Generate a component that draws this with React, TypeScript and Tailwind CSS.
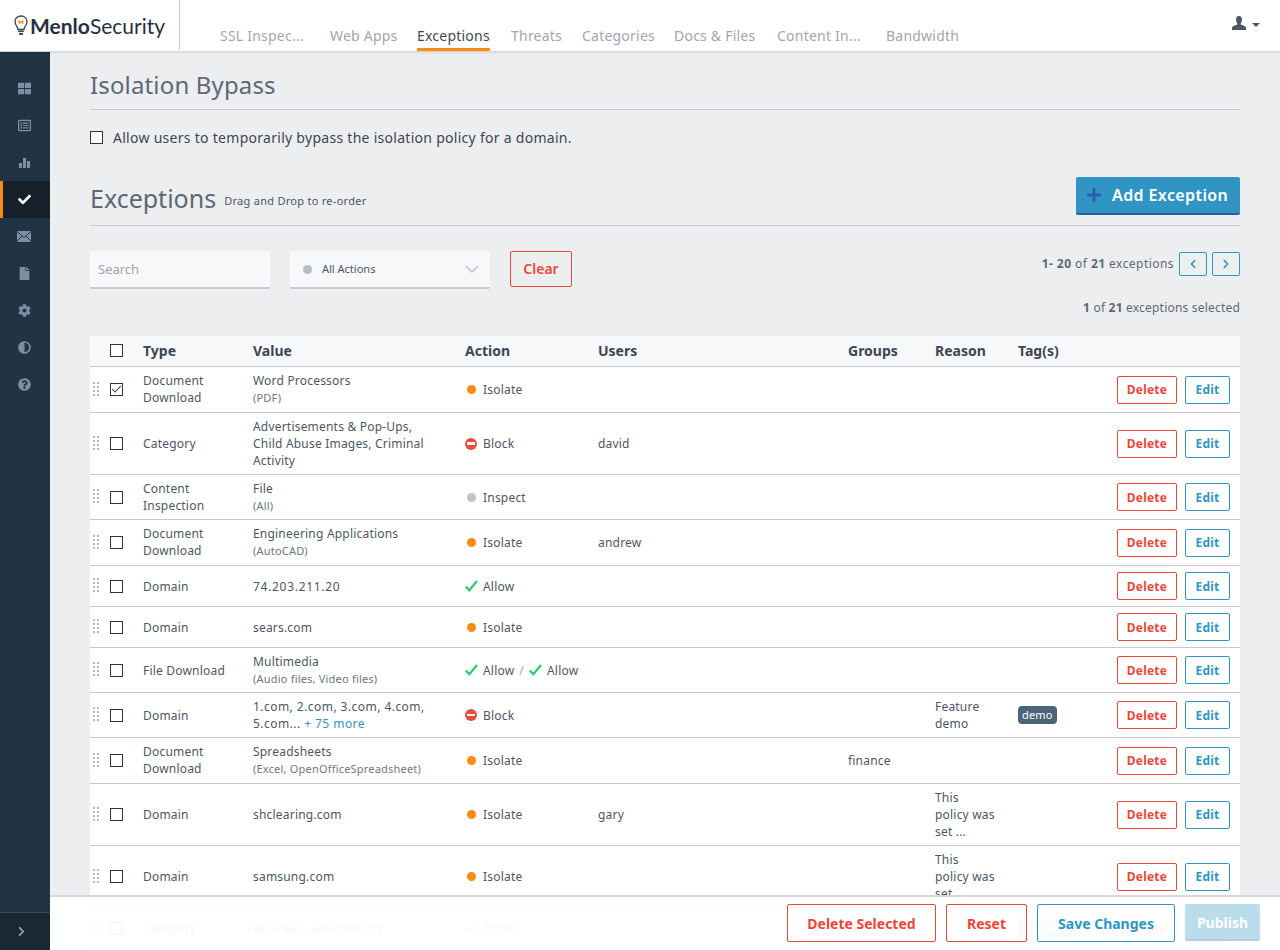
import React from "react";
import { FaThLarge, FaRegListAlt, FaCheck, FaFile, FaCog, FaAdjust, FaQuestionCircle, FaChevronLeft, FaChevronRight, FaPlus } from "react-icons/fa";

const font = { fontFamily: '"Noto Sans", "Open Sans", sans-serif' };

function Grip() {
  return (
    <svg width="7" height="16" viewBox="0 0 7 16" className="shrink-0" fill="#b4b6bb">
      {[0, 4, 8, 12].map((y) => (
        <g key={y}>
          <rect x="0" y={y} width="2" height="2" />
          <rect x="4" y={y} width="2" height="2" />
        </g>
      ))}
    </svg>
  );
}

function Box({ checked }: { checked?: boolean }) {
  return (
    <span className="w-[13px] h-[13px] border border-[#333] block relative bg-white shrink-0">
      {checked && (
        <svg viewBox="0 0 13 13" className="absolute inset-0 w-[11px] h-[11px]" fill="none" stroke="#444" strokeWidth="1.2">
          <path d="M1.5 6 L4.8 9.5 L11.5 2.5" />
        </svg>
      )}
    </span>
  );
}

function Tick() {
  return (
    <svg width="13" height="12" viewBox="0 0 13 12" fill="none" stroke="#2ecc71" strokeWidth="2.2" className="shrink-0">
      <path d="M0.8 6.5 L4.3 10.3 L12 1" />
    </svg>
  );
}

function Envelope() {
  return (
    <svg width="14" height="11" viewBox="0 0 14 11" fill="none">
      <rect x="0" y="0" width="14" height="11" fill="currentColor" />
      <path d="M0 0.5 L7 6.5 L14 0.5 M0 10.5 L5 4.8 M14 10.5 L9 4.8" stroke="#223344" strokeWidth="1" />
    </svg>
  );
}

function Bars() {
  return (
    <svg width="13" height="13" viewBox="0 0 13 13" fill="currentColor">
      <rect x="1" y="7" width="3" height="5" />
      <rect x="5" y="2" width="3" height="10" />
      <rect x="9" y="5" width="3" height="7" />
    </svg>
  );
}

function Action({ kind }: { kind: string }) {
  if (kind === "Isolate" || kind === "Inspect")
    return (
      <span className="flex items-center">
        <span className={`w-[9px] h-[9px] rounded-full ml-[2px] mr-[7px] ${kind === "Isolate" ? "bg-[#f98b13]" : "bg-[#bfc3cb]"}`} />
        {kind}
      </span>
    );
  if (kind === "Block")
    return (
      <span className="flex items-center">
        <span className="w-3 h-3 rounded-full bg-[#e74c3c] flex items-center justify-center mr-[6px]">
          <span className="w-[8px] h-[2.5px] bg-white block" />
        </span>
        Block
      </span>
    );
  if (kind === "Allow2")
    return (
      <span className="flex items-center">
        <Tick />
        <span className="ml-[5px]">Allow</span>
        <span className="mx-[5px] text-[#a0a4ad]">/</span>
        <Tick />
        <span className="ml-[5px]">Allow</span>
      </span>
    );
  return (
    <span className="flex items-center">
      <Tick />
      <span className="ml-[5px]">Allow</span>
    </span>
  );
}

type Row = {
  h: string;
  type: React.ReactNode;
  value: React.ReactNode;
  sub?: string;
  action: string;
  users?: string;
  groups?: string;
  reason?: React.ReactNode;
  tag?: string;
  checked?: boolean;
};

const rows: Row[] = [
  { h: "h-[46px]", type: <>Document<br />Download</>, value: "Word Processors", sub: "(PDF)", action: "Isolate", checked: true },
  { h: "h-[62px]", type: "Category", value: <>Advertisements &amp; Pop-Ups,<br />Child Abuse Images, Criminal<br />Activity</>, action: "Block", users: "david" },
  { h: "h-[45px]", type: <>Content<br />Inspection</>, value: "File", sub: "(All)", action: "Inspect" },
  { h: "h-[46px]", type: <>Document<br />Download</>, value: "Engineering Applications", sub: "(AutoCAD)", action: "Isolate", users: "andrew" },
  { h: "h-[41px]", type: "Domain", value: <span className="tracking-[0.7px]">74.203.211.20</span>, action: "Allow" },
  { h: "h-[41px]", type: "Domain", value: "sears.com", action: "Isolate" },
  { h: "h-[45px]", type: "File Download", value: "Multimedia", sub: "(Audio files, Video files)", action: "Allow2" },
  { h: "h-[45px]", type: "Domain", value: <span className="tracking-[0.45px]">1.com, 2.com, 3.com, 4.com,<br />5.com... <span className="text-[#3095c3]">+ 75 more</span></span>, action: "Block", reason: <>Feature<br />demo</>, tag: "demo" },
  { h: "h-[46px]", type: <>Document<br />Download</>, value: "Spreadsheets", sub: "(Excel, OpenOfficeSpreadsheet)", action: "Isolate", groups: "finance" },
  { h: "h-[62px]", type: "Domain", value: "shclearing.com", action: "Isolate", users: "gary", reason: <>This<br />policy was<br />set ...</> },
  { h: "h-[62px]", type: "Domain", value: "samsung.com", action: "Isolate", reason: <>This<br />policy was<br />set ...</> },
  { h: "h-[41px]", type: "Category", value: "Business, Government", action: "Allow", tag: "business" },
];

const tabs = [
  { label: "SSL Inspec...", cls: "ml-[40px] w-[110px]" },
  { label: "Web Apps", cls: "w-[87px]" },
  { label: "Exceptions", cls: "w-[94px]", active: true },
  { label: "Threats", cls: "w-[71px]" },
  { label: "Categories", cls: "w-[92px]" },
  { label: "Docs & Files", cls: "w-[103px]" },
  { label: "Content In...", cls: "w-[109px]" },
  { label: "Bandwidth", cls: "w-[90px]" },
];

const side = [FaThLarge, FaRegListAlt, Bars, FaCheck, Envelope, FaFile, FaCog, FaAdjust, FaQuestionCircle];

const cols = "grid grid-cols-[53px_110px_212px_133px_250px_87px_83px_1fr] items-center";

export default function App() {
  return (
    <div style={font} className="w-[1280px] h-[950px] overflow-hidden flex flex-col bg-[#edeef0] text-[#4d5666]">
      <header className="h-[52px] shrink-0 bg-white border-b border-[#d4d5d8] shadow-[0_1px_2px_rgba(0,0,0,0.08)] flex relative z-10">
        <div className="w-[180px] h-[50px] border-r border-[#c8c9cc] flex items-center pl-[14px]">
          <svg width="14" height="21" viewBox="0 0 14 21" fill="none" className="shrink-0">
            <path d="M4 14.5 C4 11.5 1 10.5 1 6.5 C1 3.2 3.7 1 7 1 C10.3 1 13 3.2 13 6.5 C13 10.5 10 11.5 10 14.5 Z" stroke="#3b4652" strokeWidth="1.3" />
            <path d="M5.3 9 V6 L7 7.6 L8.7 6 V9" stroke="#f98b13" strokeWidth="1.2" />
            <rect x="4.2" y="15.5" width="5.6" height="1.6" fill="#3b4652" />
            <rect x="4.8" y="18" width="4.4" height="2" rx="1" fill="#3b4652" />
          </svg>
          <span style={{ fontFamily: '"Lato", sans-serif' }} className="text-[21px] leading-none text-[#25313f] ml-[2px]">
            <span className="font-bold">Menlo</span>Security
          </span>
        </div>
        <nav className="flex h-[51px] items-end text-[14px] text-[#a0a6b2] tracking-[0.22px]">
          {tabs.map((t) => (
            <div key={t.label} className={t.cls}>
              <span className={t.active ? "block w-max pb-[2px] text-[#3f4a58] border-b-[3px] border-[#f98b13]" : "block w-max pb-[5px]"}>{t.label}</span>
            </div>
          ))}
        </nav>
        <div className="ml-auto mr-[20px] mt-[16px] flex items-start text-[#4d5666]">
          <svg width="14" height="14" viewBox="0 0 14 14" fill="currentColor">
            <path d="M7 0 C9.2 0 10 1.6 10 3.6 C10 5.4 9.2 7 8.6 7.6 V8.6 C10.6 9.4 13.6 10 14 11.4 V14 H0 V11.4 C0.4 10 3.4 9.4 5.4 8.6 V7.6 C4.8 7 4 5.4 4 3.6 C4 1.6 4.8 0 7 0 Z" />
          </svg>
          <span className="mt-[7px] ml-[6px] w-0 h-0 border-x-[4px] border-x-transparent border-t-[4px] border-t-[#4d5666]" />
        </div>
      </header>

      <div className="flex-1 flex min-h-0">
        <aside className="w-[50px] shrink-0 bg-[#223344] flex flex-col text-[#7f8fa3]">
          <div className="pt-[18px] flex flex-col">
            {side.map((Icon, i) => (
              <div key={i} className={`h-[37px] flex items-center justify-center pr-[2px] ${i === 3 ? "bg-[#16202a] border-l-[3px] border-[#f98b13] text-white !pr-[4px]" : ""}`}>
                <Icon className="w-[13px] h-[13px]" />
              </div>
            ))}
          </div>
          <div className="mt-auto h-[38px] bg-[#1b2733] border-t border-[#3c4a5a] flex items-center justify-center pr-[7px]">
            <FaChevronRight className="w-[11px] h-[11px] text-[#8fa3b8]" />
          </div>
        </aside>

        <main className="flex-1 relative overflow-hidden px-[40px]">
          <h1 className="text-[24px] leading-[32px] pt-[17px] pb-[8px] border-b border-[#c8c9cc] text-[#5d6876] tracking-[0.15px]">Isolation Bypass</h1>
          <label className="flex items-center mt-[19px] text-[14px] leading-[17px] text-[#3d4654] tracking-[0.28px]">
            <Box />
            <span className="ml-[10px]">Allow users to temporarily bypass the isolation policy for a domain.</span>
          </label>

          <div className="flex items-end mt-[31px] pb-[11px] border-b border-[#c8c9cc] h-[49px]">
            <h2 className="text-[25px] leading-[32px] text-[#5d6876]">Exceptions</h2>
            <span className="text-[11px] tracking-[0.28px] ml-[8px] mb-[5px] text-[#4d5666]">Drag and Drop to re-order</span>
            <button className="ml-auto self-start w-[164px] h-[38px] bg-[#3095c3] border-b-2 border-[#2a5ea8] rounded-[2px] text-white font-semibold text-[16px] tracking-[0.4px] flex items-center pl-[10px]">
              <FaPlus className="w-[16px] h-[16px] text-[#2a5ea8] mr-[10px]" />
              Add Exception
            </button>
          </div>

          <div className="flex mt-[25px] items-start">
            <input placeholder="Search" className="w-[180px] h-[38px] bg-[#f7f8fa] border-b-2 border-[#c8c9d0] rounded-[2px] px-[8px] text-[13px] outline-none placeholder:text-[#a0a4ad]" />
            <div className="w-[200px] h-[38px] ml-[20px] bg-[#f7f8fa] border-b-2 border-[#c8c9d0] rounded-[2px] flex items-center pl-[13px] text-[11px] text-[#4d5666]">
              <span className="w-[9px] h-[9px] rounded-full bg-[#b8bcc4] mr-[10px]" />
              All Actions
              <svg width="14" height="8" viewBox="0 0 14 8" className="ml-auto mr-[11px]" fill="none" stroke="#c0c3c9" strokeWidth="1.5">
                <path d="M1 1 L7 7 L13 1" />
              </svg>
            </div>
            <button className="w-[62px] h-[36px] ml-[20px] pb-[1px] border border-[#e8483a] rounded-[2px] text-[#e8483a] font-semibold text-[14px]">Clear</button>
            <div className="ml-auto mt-[1px] text-[12px] tracking-[0.45px] text-[#5d6876] flex items-center">
              <span><b>1- 20</b>&nbsp;of <b>21</b> exceptions</span>
              <span className="w-[28px] h-[24px] ml-[5px] border border-[#3095c3] rounded-[2px] flex items-center justify-center text-[#3095c3]"><FaChevronLeft className="w-[10px] h-[10px]" /></span>
              <span className="w-[28px] h-[24px] ml-[5px] border border-[#3095c3] rounded-[2px] flex items-center justify-center text-[#3095c3]"><FaChevronRight className="w-[10px] h-[10px]" /></span>
            </div>
          </div>
          <div className="text-right text-[12px] tracking-[0.2px] leading-[16px] text-[#5d6876] mt-[11px]"><b>1</b> of <b>21</b> exceptions selected</div>

          <div className="mt-[20px] text-[12px] leading-[17px]">
            <div className={`${cols} h-[31px] pb-[2px] bg-[#f7f8fa] border-b border-[#c8c8d4] text-[14px] font-bold text-[#3d4654]`}>
              <span className="pl-[20px]"><Box /></span>
              <span>Type</span>
              <span>Value</span>
              <span>Action</span>
              <span>Users</span>
              <span>Groups</span>
              <span>Reason</span>
              <span>Tag(s)</span>
            </div>
            {rows.map((r, i) => {
              const nudge = r.h === "h-[46px]" ? "-mt-[2px]" : "";
              return (
                <div key={i} className={`${cols} ${r.h} bg-white border-b border-[#c8c8d4] tracking-[0.2px]`}>
                  <span className="flex items-center pl-[3px]">
                    <Grip />
                    <span className="ml-[10px]"><Box checked={r.checked} /></span>
                  </span>
                  <span className={nudge}>{r.type}</span>
                  <span className={nudge}>
                    {r.value}
                    {r.sub && <span className="block text-[11px] text-[#6d7685]">{r.sub}</span>}
                  </span>
                  <span><Action kind={r.action} /></span>
                  <span>{r.users}</span>
                  <span>{r.groups}</span>
                  <span>{r.reason}</span>
                  <span className="flex items-center">
                    <span className="w-[99px]">
                      {r.tag && (
                        <span className={`inline-block rounded-[4px] px-[4px] text-[11px] leading-[18px] text-white ${r.tag === "demo" ? "bg-[#4d6478]" : "bg-[#8b99a8]"}`}>{r.tag}</span>
                      )}
                    </span>
                    <button className="w-[60px] h-[28px] border border-[#e8483a] rounded-[2px] text-[#e8483a] font-bold text-[12px]">Delete</button>
                    <button className="w-[45px] h-[28px] ml-[8px] border border-[#3095c3] rounded-[2px] text-[#3095c3] font-bold text-[12px]">Edit</button>
                  </span>
                </div>
              );
            })}
          </div>

          <div className="absolute left-0 right-0 bottom-0 h-[55px] bg-white/95 border-t-2 border-[#d8d8dc] flex items-start justify-end gap-[10px] pt-[7px] pr-[20px] text-[14px] font-bold">
            <button className="w-[149px] h-[38px] border border-[#e8483a] rounded-[2px] text-[#e8483a]">Delete Selected</button>
            <button className="w-[81px] h-[38px] border border-[#e8483a] rounded-[2px] text-[#e8483a]">Reset</button>
            <button className="w-[138px] h-[38px] pt-[1px] border border-[#3095c3] rounded-[2px] text-[#3095c3]">Save Changes</button>
            <button className="w-[75px] h-[37px] pt-[2px] bg-[#bbdcea] border-b-2 border-[#b4cde4] rounded-[2px] text-white">Publish</button>
          </div>
        </main>
      </div>
    </div>
  );
}
